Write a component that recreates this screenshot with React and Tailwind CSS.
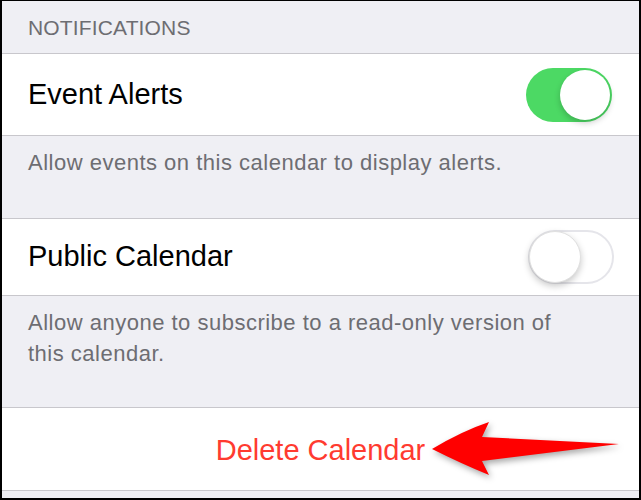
import React from "react";

const font = { fontFamily: '"Liberation Sans", Arial, sans-serif' };

function Toggle({ on }) {
  if (on) {
    return (
      <div className="relative w-[86px] h-[54px] rounded-full bg-[#4cd964]">
        <div className="absolute right-[2px] top-[2px] w-[50px] h-[50px] rounded-full bg-white shadow-[0_3px_6px_rgba(0,0,0,0.2)]" />
      </div>
    );
  }
  return (
    <div className="relative w-[86px] h-[54px] rounded-full bg-white border-2 border-[#e5e5ea]">
      <div className="absolute left-[-1px] top-[-1px] w-[52px] h-[52px] rounded-full bg-white border border-[#e0e0e0] shadow-[0_3px_7px_rgba(0,0,0,0.22)]" />
    </div>
  );
}

function Line() {
  return <div className="h-px bg-[#c8c7cc]" />;
}

export default function App() {
  return (
    <div
      className="relative w-[641px] h-[500px] overflow-hidden bg-[#efeff4] border-t border-l-2 border-r-2 border-b-2 border-black flex flex-col"
      style={font}
    >
      <div className="h-[52px] flex items-center pl-[26px] pt-[2px] text-[21px] tracking-[0.15px] text-[#6d6d72]">
        NOTIFICATIONS
      </div>
      <Line />
      <div className="h-[81px] bg-white flex items-center justify-between pl-[26px] pr-[27px]">
        <span className="text-[29px] text-black">Event Alerts</span>
        <Toggle on />
      </div>
      <Line />
      <div className="h-[82px] pl-[26px] pr-[28px] pt-[12px] text-[22px] leading-[30px] tracking-[0.5px] text-[#6d6d72]">
        Allow events on this calendar to display alerts.
      </div>
      <Line />
      <div className="h-[76px] bg-white flex items-center justify-between pl-[26px] pr-[25px]">
        <span className="text-[29px] text-black">Public Calendar</span>
        <Toggle on={false} />
      </div>
      <Line />
      <div className="h-[111px] pl-[26px] pr-[60px] pt-[11px] text-[22px] leading-[31px] tracking-[0.5px] text-[#6d6d72]">
        Allow anyone to subscribe to a read-only version of this calendar.
      </div>
      <Line />
      <div className="h-[82px] bg-white flex items-center justify-center pt-[3px]">
        <span className="text-[29px] text-[#ff3b30]">Delete Calendar</span>
      </div>
      <Line />
      <div className="flex-1" />
      <svg
        className="absolute left-0 top-0 pointer-events-none"
        width="641"
        height="500"
        viewBox="0 0 641 500"
        style={{ filter: "drop-shadow(2px 3px 3px rgba(0,0,0,0.35))" }}
      >
        <path
          d="M430 448 Q460 430 487 421 L480 436 L617 443 L480 460 L487 474 Q460 463 430 448 Z"
          fill="#ff0000"
        />
      </svg>
    </div>
  );
}
